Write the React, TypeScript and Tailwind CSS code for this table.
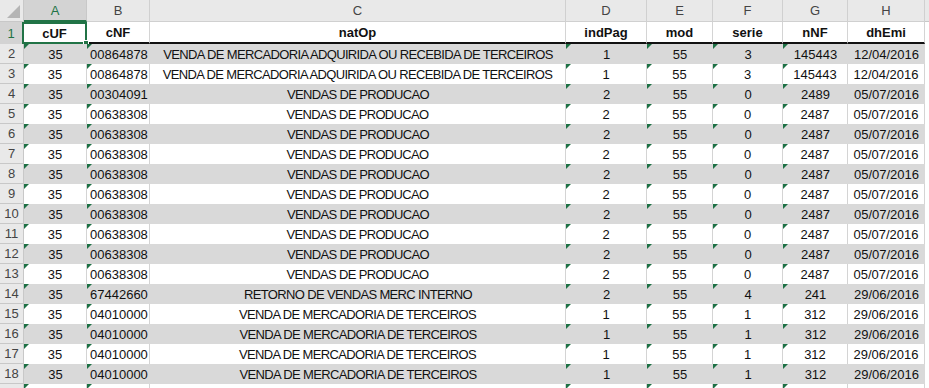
import React from "react";

// column template shared by every row: row header, A..H, filler
const cols =
  "grid grid-cols-[24px_63px_63px_416px_81px_66px_70px_65px_77px_1fr]";

type Row = [string, string, string, string, string, string, string, string];

const venda1: Row = ["35", "00864878", "VENDA DE MERCADORIA ADQUIRIDA OU RECEBIDA DE TERCEIROS", "1", "55", "3", "145443", "12/04/2016"];
const prod: Row = ["35", "00638308", "VENDAS DE PRODUCAO", "2", "55", "0", "2487", "05/07/2016"];
const venda3: Row = ["35", "04010000", "VENDA DE MERCADORIA DE TERCEIROS", "1", "55", "1", "312", "29/06/2016"];

const rows: Row[] = [
  venda1,
  venda1,
  ["35", "00304091", "VENDAS DE PRODUCAO", "2", "55", "0", "2489", "05/07/2016"],
  prod, prod, prod, prod, prod, prod, prod, prod, prod,
  ["35", "67442660", "RETORNO DE VENDAS MERC INTERNO", "2", "55", "4", "241", "29/06/2016"],
  venda3, venda3, venda3, venda3,
];

const letters = ["A", "B", "C", "D", "E", "F", "G", "H"];
const headers = ["cUF", "cNF", "natOp", "indPag", "mod", "serie", "nNF", "dhEmi"];
// columns that show the "number stored as text" marker
const flagged = [true, true, false, true, true, true, true, false];

const Flag = () => (
  <span className="absolute left-0 top-0 w-0 h-0 border-t-[5px] border-r-[5px] border-t-[#1e7145] border-r-transparent" />
);

export default function App() {
  return (
    <div
      className="w-[929px] h-[388px] overflow-hidden bg-white text-[13px] text-[#111] leading-none"
      style={{ fontFamily: '"Liberation Sans", Arial, sans-serif' }}
    >
      {/* column letters */}
      <div className={`${cols} h-[22px] bg-[#e9e9e9] text-[#444]`}>
        <div className="relative border-r border-b border-[#c8c8c8]">
          <span className="absolute right-[3px] bottom-[3px] w-0 h-0 border-b-[13px] border-l-[13px] border-b-[#b5b5b5] border-l-transparent" />
        </div>
        {letters.map((l, i) => (
          <div
            key={l}
            className={
              i === 0
                ? "flex items-center justify-center bg-[#d3d3d3] text-[#217346] border-r border-[#c8c8c8] border-b-2 border-b-[#217346]"
                : "flex items-center justify-center border-r border-b border-[#d0d0d0]"
            }
          >
            {l}
          </div>
        ))}
        <div className="border-b border-[#c8c8c8]" />
      </div>

      {/* header row */}
      <div className={`${cols} h-[22px] font-bold`}>
        <div className="flex items-center justify-center bg-[#d3d3d3] text-[#217346] font-normal border-r-2 border-[#217346]">
          1
        </div>
        {headers.map((h, i) => (
          <div
            key={h}
            className={
              i === 0
                ? "relative flex items-center justify-center border-2 border-[#217346] -ml-[2px]"
                : "flex items-center justify-center border-r border-[#d4d4d4] border-b-2 border-b-[#111]"
            }
          >
            {h}
            {i === 0 && (
              <span className="absolute -right-[4px] -bottom-[4px] w-[6px] h-[6px] bg-[#217346] border border-white" />
            )}
          </div>
        ))}
        <div />
      </div>

      {/* data rows */}
      {rows.map((r, ri) => {
        const n = ri + 2;
        const gray = n % 2 === 0;
        return (
          <div key={ri} className={`${cols} h-[20px]`}>
            <div className="flex items-center justify-center bg-[#e9e9e9] text-[#444] border-r border-b border-[#c8c8c8]">
              {n}
            </div>
            {r.map((v, ci) => (
              <div
                key={ci}
                className={`relative flex items-center overflow-hidden whitespace-nowrap ${
                  ci === 1 ? "justify-start pl-[3px]" : "justify-center"
                } ${ci === 2 ? "tracking-[-0.65px]" : ""} ${
                  gray ? "bg-[#d9d9d9]" : "bg-white border-r border-[#d4d4d4]"
                }`}
              >
                {flagged[ci] && <Flag />}
                {v}
              </div>
            ))}
            <div className="bg-white" />
          </div>
        );
      })}

      {/* row 19, only its top edge is in view */}
      <div className={`${cols} h-[20px]`}>
        <div className="bg-[#e9e9e9] border-r border-[#c8c8c8]" />
        {flagged.map((f, ci) => (
          <div key={ci} className="relative bg-white border-r border-[#d4d4d4]">
            {f && <Flag />}
          </div>
        ))}
        <div className="bg-white" />
      </div>
    </div>
  );
}
